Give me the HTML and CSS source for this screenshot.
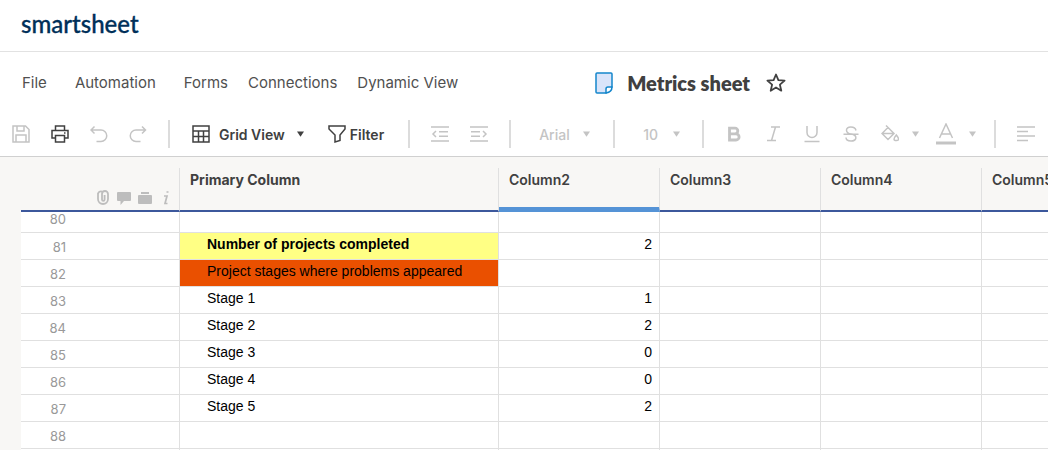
FILE: index.html
```html
<!DOCTYPE html>
<html lang="en">
<head>
<meta charset="utf-8">
<title>Metrics sheet - Smartsheet</title>
<link rel="stylesheet" href="styles.css">
</head>
<body>
<header class="brand"><a class="logo" href="#">smartsheet</a></header>
<div class="menubar">
  <nav class="menu">
    <a class="wide" href="#">File</a><a class="wide" href="#">Automation</a><a href="#">Forms</a><a href="#">Connections</a><a href="#">Dynamic View</a>
  </nav>
  <div class="title">
    <svg width="18" height="22" viewBox="0 0 18 22" fill="#d9e4fa" stroke="#1486cc" stroke-width="1.5" stroke-linejoin="round"><path d="M2 1h14a1 1 0 0 1 1 1v13l-6 6H2a1 1 0 0 1-1-1V2a1 1 0 0 1 1-1z"/><path fill="#fff" d="M17 15h-4a2 2 0 0 0-2 2v4q6-1 6-6z"/></svg>
    <h1>Metrics sheet</h1>
    <button class="star" aria-label="Favorite"><svg width="20" height="20" viewBox="0 0 20 20" fill="none" stroke="#404040" stroke-width="1.8" stroke-linejoin="round"><path d="M10 1.500l2.400 5.600 6.200.5-4.700 4 1.400 6.100-5.300-3.200-5.300 3.200 1.400-6.100-4.700-4 6.200-.5z"/></svg></button>
  </div>
</div>
<div class="toolbar">
  <div class="group icons">
    <button aria-label="Save"><svg class="ic" viewBox="0 0 18 18"><path d="M1 1h12.500L17 4.500V17H1zM5 1v5h7V1M4 17V10h10v7"/></svg></button>
    <button class="dark" aria-label="Print"><svg class="ic" viewBox="0 0 18 18"><path d="M4.500 5V1h9v4M4.500 13H1V5.500h16V13h-3.500M4.500 10.500h9V17h-9zM13 8h1.500"/></svg></button>
    <button aria-label="Undo"><svg class="ic" viewBox="0 0 18 18"><path d="M4.500 1.500L1 5l3.500 3.500M1 5h10a5.700 5.700 0 0 1 0 11.500H6.500"/></svg></button>
    <button aria-label="Redo"><svg class="ic" viewBox="0 0 18 18"><path d="M13 1.500L16.500 5 13 8.500M16.500 5H7a5.700 5.700 0 0 0 0 11.500H11.500"/></svg></button>
  </div>
  <div class="group view">
    <button class="dark grid-btn"><svg class="ic" viewBox="0 0 18 18"><path d="M1 1h16v16H1zM1 6h16M1 11.500h16M6.500 6v11M11.500 6v11"/></svg>Grid View<svg class="caret" viewBox="0 0 8 6"><path d="M0 0h8L4 6z"/></svg></button>
    <button class="dark filter-btn"><svg class="ic" viewBox="0 0 18 18"><path d="M1 1h16v3l-5 6v5.500L7 17v-7L1 4z"/></svg>Filter</button>
  </div>
  <div class="group icons indents">
    <button aria-label="Outdent"><svg class="ic" viewBox="0 0 18 18"><path d="M0 2h18M8 6.800h9M8 11.200h9M0 16h18M5 6L2 9l3 3"/></svg></button>
    <button aria-label="Indent"><svg class="ic" viewBox="0 0 18 18"><path d="M0 2h18M1 6.800h9M1 11.200h9M0 16h18M13 6l3 3-3 3"/></svg></button>
  </div>
  <div class="group font">
    <select aria-label="Font"><option>Arial</option></select><svg class="caret" viewBox="0 0 8 6"><path d="M0 0h8L4 6z"/></svg>
  </div>
  <div class="group size">
    <select aria-label="Font size"><option>10</option></select><svg class="caret" viewBox="0 0 8 6"><path d="M0 0h8L4 6z"/></svg>
  </div>
  <div class="group icons format">
    <button aria-label="Bold"><svg class="ic bold" viewBox="0 0 18 18"><path d="M4.500 3.200h5.500a2.700 2.700 0 0 1 0 5.600H4.500zM4.500 8.800h6.500a3 3 0 0 1 0 6.200H4.500z"/></svg></button>
    <button aria-label="Italic"><svg class="ic" viewBox="0 0 18 18"><path d="M7 2h9M3 15.500h9M11.500 2l-4 13.500"/></svg></button>
    <button aria-label="Underline"><svg class="ic" viewBox="0 0 18 18"><path d="M4 1v6.500a5 5 0 0 0 10 0V1M1.500 16.500h15"/></svg></button>
    <button aria-label="Strikethrough"><svg class="ic" viewBox="0 0 18 18"><path d="M14 5.500C13 .8 4 1 4.500 5.500 4.700 7.500 6.500 8.500 9 9h1c6 2 4.500 7-1 7-3 0-5-1.500-5-3.500M1.500 9.300h15"/></svg></button>
    <button class="drop" aria-label="Background color"><svg class="ic" viewBox="0 0 18 18"><path d="M5 .5L13 8.500 7 14.500 1 8.500 7 2.500M1 8.500h12M15.300 10q-4.500 5.500 0 5.500t0-5.500z"/></svg><svg class="caret" viewBox="0 0 8 6"><path d="M0 0h8L4 6z"/></svg></button>
    <button class="drop" aria-label="Text color"><svg class="ic-text" viewBox="0 0 20 22"><path d="M3.500 15L10 1l6.500 14M5.500 11h9"/><path class="swatch" d="M0 20h20"/></svg><svg class="caret" viewBox="0 0 8 6"><path d="M0 0h8L4 6z"/></svg></button>
  </div>
  <div class="group icons align">
    <button aria-label="Align left"><svg class="ic" viewBox="0 0 18 18"><path d="M0 2h18M0 6.500h11M0 11h18M0 15.500h11"/></svg></button>
  </div>
</div>
<main class="sheet">
  <table>
    <colgroup><col class="c-num"><col class="c-primary"><col class="c"><col class="c"><col class="c"><col class="c"></colgroup>
    <thead>
      <tr>
        <th><div class="row-icons">
          <svg width="14" height="16" viewBox="0 0 14 16" fill="none" stroke="#bdbdbd" stroke-width="1.800"><path d="M2 3v6a5 5 0 0 0 10 0V4a3 3 0 0 0-6 0v5.500a1.300 1.300 0 0 0 2.600 0V5M2 4a3 3 0 0 1 4-2.500"/></svg>
          <svg width="14" height="16" viewBox="0 0 14 16" fill="#bdbdbd"><path d="M1 2h12q1 0 1 1v7q0 1-1 1H7l-3.500 4v-4H1q-1 0-1-1V3q0-1 1-1z"/></svg>
          <svg width="14" height="16" viewBox="0 0 14 16" fill="#bdbdbd"><path d="M3 2h8v2H3zM1 5h12q1 0 1 1v7q0 1-1 1H1q-1 0-1-1V6q0-1 1-1z"/></svg>
          <svg class="info" width="6" height="16" viewBox="0 0 6 16" fill="none" stroke="#bdbdbd" stroke-width="1.700"><path d="M3.500 2h2M1 6h3L2 13.500h2.500"/></svg>
        </div></th>
        <th><span class="primary">Primary Column</span></th><th class="selected">Column2</th><th>Column3</th><th>Column4</th><th>Column5</th>
      </tr>
    </thead>
    <tbody>
      <tr class="partial"><th>80</th><td></td><td></td><td></td><td></td><td></td></tr>
      <tr><th>81</th><td class="yellow">Number of projects completed</td><td>2</td><td></td><td></td><td></td></tr>
      <tr><th>82</th><td class="orange">Project stages where problems appeared</td><td></td><td></td><td></td><td></td></tr>
      <tr><th>83</th><td>Stage 1</td><td>1</td><td></td><td></td><td></td></tr>
      <tr><th>84</th><td>Stage 2</td><td>2</td><td></td><td></td><td></td></tr>
      <tr><th>85</th><td>Stage 3</td><td>0</td><td></td><td></td><td></td></tr>
      <tr><th>86</th><td>Stage 4</td><td>0</td><td></td><td></td><td></td></tr>
      <tr><th>87</th><td>Stage 5</td><td>2</td><td></td><td></td><td></td></tr>
      <tr><th>88</th><td></td><td></td><td></td><td></td><td></td></tr>
      <tr><th></th><td></td><td></td><td></td><td></td><td></td></tr>
    </tbody>
  </table>
</main>
</body>
</html>
```
FILE: styles.css
```css
* { box-sizing: border-box; }
html, body { height: 100%; }
body {
  margin: 0;
  display: flex;
  flex-direction: column;
  overflow: hidden;
  background: #fff;
  color: #505050;
  font-family: Inter, "Liberation Sans", sans-serif;
  font-size: 14px;
}
a { color: inherit; text-decoration: none; }
button, select {
  font: inherit;
  color: inherit;
  background: none;
  border: 0;
  padding: 0;
  margin: 0;
}
svg { display: block; flex: none; }

.brand {
  flex: none;
  display: flex;
  align-items: center;
  height: 52px;
  padding: 0 21px 4px;
  border-bottom: 1px solid #e2e2e2;
}
.logo { font: 500 24px/30px Lato, sans-serif; color: #003059; -webkit-text-stroke: 0.3px #003059; }

.menubar {
  flex: none;
  display: flex;
  align-items: center;
  height: 61px;
  padding-left: 22px;
}
.menu { display: flex; gap: 20px; flex: none; line-height: 20px; font-size: 15px; }
.menu .wide { margin-right: 8px; }
.title { display: flex; align-items: center; flex: none; margin-left: 137px; }
.title h1 { margin: 0 16px 0 14px; font: 800 20px/26px Lato, sans-serif; color: #404040; }

.toolbar {
  flex: none;
  display: flex;
  align-items: center;
  height: 44px;
  padding-bottom: 1px;
  border-bottom: 1px solid #d0d0d0;
  color: #c4c4c4;
  font-weight: 600;
}
.group {
  flex: none;
  display: flex;
  align-items: center;
  height: 28px;
  border-right: 2px solid #dcdcdc;
}
.group button { display: flex; align-items: center; flex: none; }
.group .dark { color: #404040; }
.icons { gap: 21px; padding: 0 21px; }
.icons:first-child { padding-left: 12px; }
.view { gap: 24px; padding: 0 24px 0 22px; }
.grid-btn { gap: 9px; }
.grid-btn .caret { margin-left: 3px; }
.filter-btn { gap: 4px; }
.font { padding: 0 23px 0 28px; gap: 13px; }
.size { padding: 0 22px 0 28px; gap: 15px; }
.font select, .size select { appearance: none; font-weight: 500; }
.ic { width: 18px; height: 18px; fill: none; stroke: currentColor; stroke-width: 1.5px; }
.ic-text { width: 20px; height: 22px; fill: none; stroke: currentColor; stroke-width: 1.5px; }
.bold { stroke-width: 2.8px; }
.swatch { stroke-width: 3px; }
.caret { width: 7px; height: 6px; fill: currentColor; }
.drop { gap: 13px; }
.drop + .drop { margin-left: -4px; }
.format { padding-right: 18px; }
.align { border-right: 0; }

.sheet { flex: 1; min-height: 0; overflow: hidden; padding: 11px 0 0 21px; background: #f8f7f5; }
table { width: 1122px; table-layout: fixed; border-collapse: separate; border-spacing: 0; }
.c-num { width: 159px; }
.c-primary { width: 319px; }
.c { width: 161px; }
thead th {
  height: 44px;
  padding: 3px 10px 0;
  border-right: 1px solid #e0e0e0;
  border-bottom: 2px solid #3c589c;
  vertical-align: top;
  text-align: left;
  font-size: 14px;
  line-height: 17px;
  font-weight: 600;
  color: #404040;
}
thead th:first-child { vertical-align: bottom; }
thead .selected { border-bottom: 5px solid #5593d6; }
.primary { font-weight: 700; }
.row-icons { display: flex; justify-content: flex-end; gap: 7px; padding-bottom: 4px; }
.info { margin-left: 4px; }
tbody th, tbody td {
  height: 27px;
  border-right: 1px solid #e0e0e0;
  border-bottom: 1px solid #e0e0e0;
  background: #fff;
  line-height: 20px;
}
tbody th { padding: 1px 113px 0 0; text-align: right; font-weight: 400; font-size: 13px; color: #999; }
tbody td {
  padding: 0 7px 4px;
  text-align: right;
  font-family: "Liberation Sans", Arial, sans-serif;
  font-size: 14px;
  color: #000;
  white-space: nowrap;
}
tbody td:nth-child(2) { padding-left: 27px; text-align: left; }
tbody .partial th { height: 21px; line-height: 15px; padding-top: 0; padding-bottom: 5px; }
tbody .partial td { height: 21px; }
td.yellow { background: #ffff84; font-weight: 700; }
td.orange { background: #ea5000; }
```
